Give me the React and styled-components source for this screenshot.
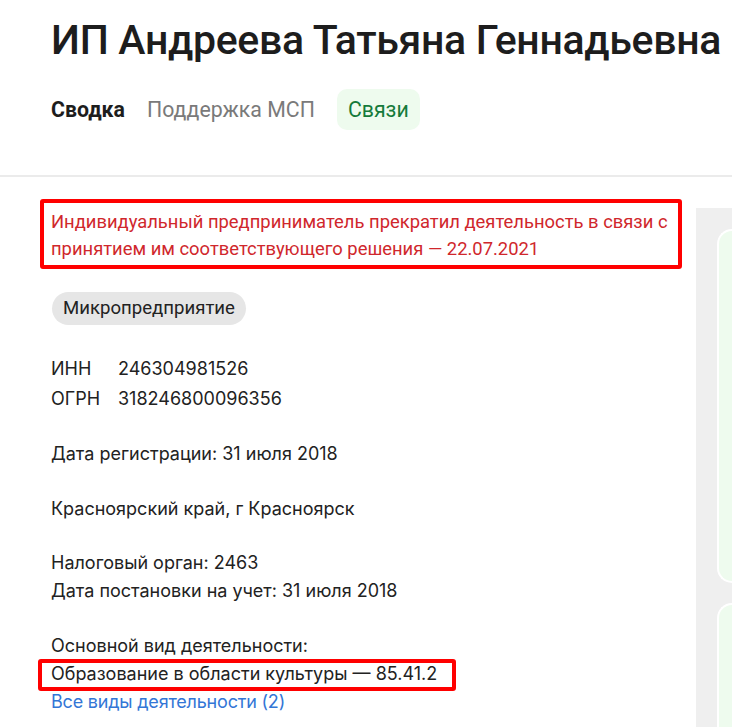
import React from 'react'
import styled, { createGlobalStyle } from 'styled-components'

const GlobalStyle = createGlobalStyle`
  html, body {
    margin: 0;
    padding: 0;
    background: #fff;
  }
  body {
    font-family: Inter, "Noto Sans", sans-serif;
    color: #222;
    overflow: hidden;
  }
`

const Header = styled.header`
  padding: 16px 0 0 51px;
  height: 159px;
  border-bottom: 2px solid #ebebeb;
  box-sizing: content-box;
  white-space: nowrap;
`

const Title = styled.h1`
  margin: 0;
  font-family: Roboto, "Liberation Sans", sans-serif;
  font-weight: 500;
  font-size: 41px;
  line-height: 48px;
  color: #1d1d1d;
  letter-spacing: -0.3px;
`

const Tabs = styled.nav`
  display: flex;
  align-items: center;
  gap: 22px;
  margin-top: 25px;
`

const Tab = styled.a`
  font-family: Roboto, "Liberation Sans", sans-serif;
  font-size: 21.3px;
  line-height: 41px;
  text-decoration: none;
  color: ${p => (p.$active ? '#1d1d1d' : '#7a7a7a')};
  font-weight: ${p => (p.$active ? 700 : 400)};
  ${p =>
    p.$pill &&
    `
    background: #eefbee;
    color: #157a3a;
    padding: 0 11px;
    border-radius: 10px;
  `}
`

const Main = styled.div`
  display: grid;
  grid-template-columns: 696px 1fr;
`

const Content = styled.section`
  padding: 31px 0 0 51px;
`

const Side = styled.aside`
  margin-top: 31px;
  background: #efefef;
  padding: 21px 0 0 21px;
  display: flex;
  flex-direction: column;
  gap: 20px;
  height: 600px;
`

const Card = styled.div`
  height: ${p => p.$h}px;
  background: #eefbee;
  border: 2px solid #fff;
  border-right: none;
  border-radius: 18px 0 0 18px;
`

const Marked = styled.div`
  position: relative;
  &::after {
    content: '';
    position: absolute;
    top: ${p => p.$t}px;
    bottom: ${p => p.$b}px;
    left: ${p => p.$l}px;
    right: ${p => p.$r}px;
    border: 4px solid #ff0000;
    border-radius: 3px;
    pointer-events: none;
  }
`

const Notice = styled.p`
  margin: 0;
  font-family: Roboto, "Liberation Sans", sans-serif;
  font-size: 18.4px;
  line-height: 27px;
  color: #d0272c;
  width: 630px;
`

const Chip = styled.span`
  display: inline-block;
  margin-top: 30px;
  margin-left: 1px;
  padding: 0 11px;
  font-family: Roboto, "Liberation Sans", sans-serif;
  font-size: 18.6px;
  line-height: 33px;
  background: #e6e6e6;
  border-radius: 17px;
  color: #222;
`

const Codes = styled.dl`
  display: grid;
  grid-template-columns: 67px auto;
  margin: 29px 0 0;
  font-size: 18px;
  line-height: 30px;
  dt, dd { margin: 0; }
`

const Block = styled.div`
  margin-top: ${p => p.$mt}px;
  font-size: 18px;
  line-height: 28px;
`

const Line = styled.div``

const Link = styled.a`
  color: #3376d6;
  text-decoration: none;
  letter-spacing: -0.2px;
`

export default function App() {
  return (
    <>
      <GlobalStyle />
      <Header>
        <Title>ИП Андреева Татьяна Геннадьевна</Title>
        <Tabs>
          <Tab $active>Сводка</Tab>
          <Tab>Поддержка МСП</Tab>
          <Tab $pill>Связи</Tab>
        </Tabs>
      </Header>
      <Main>
        <Content>
          <Marked $t={-9} $b={-7} $l={-11} $r={14}>
            <Notice>
              Индивидуальный предприниматель прекратил деятельность в связи с принятием им
              соответствующего решения — 22.07.2021
            </Notice>
          </Marked>
          <Chip>Микропредприятие</Chip>
          <Codes>
            <dt>ИНН</dt>
            <dd>246304981526</dd>
            <dt>ОГРН</dt>
            <dd>318246800096356</dd>
          </Codes>
          <Block $mt={26}>Дата регистрации: 31 июля 2018</Block>
          <Block $mt={27}>Красноярский край, г Красноярск</Block>
          <Block $mt={26}>
            <Line>Налоговый орган: 2463</Line>
            <Line>Дата постановки на учет: 31 июля 2018</Line>
          </Block>
          <Block $mt={27}>
            <Line>Основной вид деятельности:</Line>
            <Marked $t={-1} $b={-3} $l={-13} $r={240}>
              Образование в области культуры — 85.41.2
            </Marked>
            <Line>
              <Link href="#">Все виды деятельности (2)</Link>
            </Line>
          </Block>
        </Content>
        <Side>
          <Card $h={350} />
          <Card $h={200} />
        </Side>
      </Main>
    </>
  )
}
